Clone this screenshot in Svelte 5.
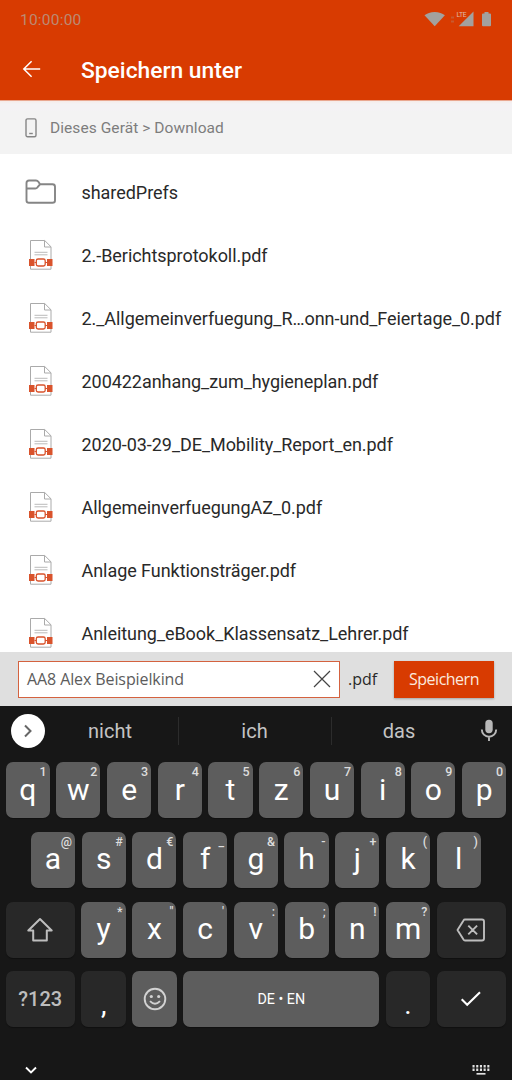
<script>
  const files = [
    '2.-Berichtsprotokoll.pdf',
    '2._Allgemeinverfuegung_R…onn-und_Feiertage_0.pdf',
    '200422anhang_zum_hygieneplan.pdf',
    '2020-03-29_DE_Mobility_Report_en.pdf',
    'AllgemeinverfuegungAZ_0.pdf',
    'Anlage Funktionsträger.pdf',
    'Anleitung_eBook_Klassensatz_Lehrer.pdf'
  ];
  const pair = (letters, hints) => [...letters].map((l, i) => ({ l, h: hints[i] }));
  const row1 = pair('qwertzuiop', '1234567890');
  const row2 = pair('asdfghjkl', '@#€_&-+()');
  const row3 = pair('yxcvbnm', '*"\':;!?');
</script>

{#snippet key(k)}
  <div class="key"><span class="letter">{k.l}</span><span class="hint">{k.h}</span></div>
{/snippet}

<div class="screen">
  <header>
    <div class="status">
      <span>10:00:00</span>
      <svg width="70" height="20" viewBox="0 0 70 20" fill="#a3a19e">
        <path d="M.5 6.200C3 4.300 6.500 3 10.700 3s7.700 1.300 10.200 3.200L10.700 17.300z" />
        <path d="M27 7.500h3v2h-3zM27 11.500h3v2h-3z" opacity=".3" />
        <path d="M49.500 2.500v14.800H34.700z" />
        <text x="32.500" y="7.600" font-size="6.800" textLength="10" fill="#e0bda9">LTE</text>
        <path d="M59 4.500h1.500V3h4v1.500H66q1 0 1 1v10.800q0 1-1 1h-7q-1 0-1-1V5.500q0-1 1-1z" />
      </svg>
    </div>
    <div class="title">
      <svg width="20" height="18" viewBox="0 0 20 18" fill="none" stroke="#fff" stroke-width="1.500"><path d="M18.200 9H1.800M9.600 1.200L1.800 9l7.800 7.800" /></svg>
      <h1>Speichern unter</h1>
    </div>
  </header>

  <nav>
    <svg width="12" height="20" viewBox="0 0 12 20" fill="none" stroke="#858585"><rect x="1" y=".9" width="10" height="17.800" rx="1.500" stroke-width="1.400" /><path d="M4.200 15.500h3.600" stroke-width="1.400" /></svg>
    <span>Dieses Gerät &gt; Download</span>
  </nav>

  <main>
    <div class="row">
      <div class="ico">
        <svg width="32" height="26" viewBox="0 0 32 26" fill="none" stroke="#858585" stroke-width="1.900" stroke-linejoin="round"><path d="M1.500 9.300V4q0-2.500 2.500-2.500h7q1.500 0 2.400 1.200L15 5.300h12.500q2.500 0 2.500 2.500v13.700q0 2.300-2.500 2.300H4q-2.500 0-2.500-2.300zM1.500 9.500h8.700q1.500 0 2.400-1.300L15 5.300" /></svg>
      </div>
      <span>sharedPrefs</span>
    </div>
    {#each files as f}
      <div class="row">
        <div class="ico">
          <svg width="26" height="32" viewBox="0 0 26 32" fill="none">
            <path d="M2.500 1.500h14.200l6.300 6.300v22.400H2.500z" fill="#fff" stroke="#aaa" stroke-width="1" />
            <path d="M16.500 1.500V8H23" stroke="#aaa" />
            <path d="M6.500 13.300h13M6.500 15.800h13" stroke="#bbb" stroke-width="1" />
            <path d="M1 20h5.500v7H1zM19 20h5.500v7H19z" fill="#d9532c" />
            <rect x="8.300" y="20" width="8.900" height="7" rx="1.800" fill="#fff" stroke="#d9532c" stroke-width="1.300" />
            <path d="M6.500 23.500h2M17 23.500h2" stroke="#d9532c" />
          </svg>
        </div>
        <span>{f}</span>
      </div>
    {/each}
  </main>

  <div class="save">
    <div class="field">
      <span>AA8 Alex Beispielkind</span>
      <svg width="18" height="18" viewBox="0 0 18 18" stroke="#444" stroke-width="1.200"><path d="M1 1l16 16M17 1L1 17" /></svg>
    </div>
    <span class="ext">.pdf</span>
    <div class="btn"><span>Speichern</span></div>
  </div>

  <div class="keyboard">
    <div class="suggest">
      <div class="more"><svg width="10" height="14" viewBox="0 0 10 14" fill="none" stroke="#666" stroke-width="2"><path d="M2 1.500L7.500 7 2 12.500" /></svg></div>
      <span class="w1">nicht</span><i></i><span class="w2">ich</span><i></i><span class="w3">das</span>
      <svg class="mic" width="18" height="24" viewBox="0 0 18 24"><rect x="5.300" y=".7" width="7.400" height="13.600" rx="3.700" fill="#b8b8b8" /><path d="M1.800 10.500a7.200 7.200 0 0 0 14.400 0M9 17.500V22" fill="none" stroke="#b8b8b8" stroke-width="1.900" /></svg>
    </div>
    <div class="keys">
      <div class="krow">{#each row1 as k}{@render key(k)}{/each}</div>
      <div class="krow mid">{#each row2 as k}{@render key(k)}{/each}</div>
      <div class="krow">
        <div class="key dark wide"><svg width="28" height="26" viewBox="0 0 28 26" fill="none" stroke="#bdbdbd" stroke-width="2" stroke-linejoin="round"><path d="M14 2L2.300 13.500h4.900v10h13.600v-10h4.900z" /></svg></div>
        {#each row3 as k}{@render key(k)}{/each}
        <div class="key dark wide"><svg width="30" height="24" viewBox="0 0 30 24" fill="none" stroke="#bdbdbd" stroke-width="1.900" stroke-linejoin="round"><path d="M9 1.500h17q2 0 2 2v17q0 2-2 2H9Q8 22.500 7.500 21.600L1.500 12l6-9.600Q8 1.500 9 1.500zM12.300 7.600l8.800 8.800M21.100 7.600l-8.800 8.800" /></svg></div>
      </div>
      <div class="krow">
        <div class="key dark wide sym">?123</div>
        <div class="key dark punct">,</div>
        <div class="key"><svg width="24" height="24" viewBox="0 0 24 24" fill="none" stroke="#d2d2d2" stroke-width="1.900"><circle cx="12" cy="12" r="10.300" /><path d="M7 14.200q5 5.200 10 0" /><circle cx="8.300" cy="9.500" r="1.600" fill="#d2d2d2" stroke="none" /><circle cx="15.700" cy="9.500" r="1.600" fill="#d2d2d2" stroke="none" /></svg></div>
        <div class="key space">DE • EN</div>
        <div class="key dark punct">.</div>
        <div class="key dark wide"><svg width="22" height="18" viewBox="0 0 22 18" fill="none" stroke="#fff" stroke-width="2.100"><path d="M1.700 9.200l5.500 5.500L20 2.200" /></svg></div>
      </div>
    </div>
    <div class="bottom">
      <svg width="14" height="9" viewBox="0 0 14 9" fill="none" stroke="#fff" stroke-width="1.900"><path d="M2 1.500l5 5 5-5" /></svg>
      <svg width="18" height="12" viewBox="0 0 18 12" stroke="#e2e2e2"><path d="M.5 2.200h17M.5 5.800h17" stroke-width="2.500" stroke-dasharray="2.100 1.600" /><path d="M4.500 9.800h9" stroke-width="1.700" /></svg>
    </div>
  </div>
</div>

<style>
  :global(body) { margin: 0; }
  .screen { width: 512px; height: 1080px; overflow: hidden; display: flex; flex-direction: column; background: #fff; font-family: Roboto, sans-serif; color: #292929; }
  .screen * { box-sizing: border-box; }
  svg { display: block; flex: none; }
  header { height: 100px; background: #d83b01; flex: none; }
  .status { height: 39px; padding: 1px 18px 0 20px; display: flex; align-items: center; justify-content: space-between; color: #bb8a73; font-size: 15.500px; letter-spacing: .22px; }
  .status svg { margin-top: -3px; letter-spacing: 0; }
  .title { height: 61px; display: flex; align-items: center; padding-left: 22px; gap: 39px; }
  .title svg { margin-top: -2px; }
  h1 { margin: 1px 0 0; color: #fff; font-size: 22.800px; font-weight: 500; }
  nav { height: 54px; flex: none; background: linear-gradient(#e9a791 0, #e9a791 1px, #f6ebe9 1px, #f4f2f5 4px, #f4f2f5 10px, #f3f3f3 11px); padding: 1px 0 0 25px; display: flex; align-items: center; gap: 13px; color: #7d7d7d; font-size: 15.500px; letter-spacing: .07px; }
  main { height: 498px; flex: none; padding-top: 6px; overflow: hidden; }
  .row { height: 63px; display: flex; align-items: center; font-size: 18px; white-space: nowrap; letter-spacing: -.05px; }
  .row span { padding: 1px 0 0 .5px; }
  .ico { width: 81px; display: flex; justify-content: center; }
  .save { height: 54px; flex: none; background: #dfdfdf; display: flex; align-items: center; padding-left: 18px; font-family: 'Open Sans', sans-serif; }
  .field { width: 322px; height: 37px; border: 1px solid #d4623f; background: #fff; display: flex; align-items: center; justify-content: space-between; padding: 0 8px; font-size: 16px; color: #5c5c5c; letter-spacing: -.1px; white-space: nowrap; }
  .ext { width: 54px; padding-left: 8px; font-size: 16px; }
  .btn { width: 100px; height: 37px; background: #d83b01; color: #fbe9df; display: flex; align-items: center; justify-content: center; font-size: 16px; letter-spacing: -.5px; box-shadow: 0 1px 2px #0004; }
  .keyboard { flex: 1; background: #171717; color: #fff; }
  .suggest { height: 56px; padding: 0 14px 6px 11px; display: flex; align-items: center; font-size: 20px; color: #c4c4c4; }
  .suggest span { text-align: center; }
  .suggest i { width: 1px; height: 28px; background: #2c2c2c; }
  .more { width: 34px; height: 34px; border-radius: 50%; background: #fff; display: flex; align-items: center; justify-content: center; }
  .w1 { width: 133px; padding-right: 3px; }
  .w2 { width: 152px; padding-right: 1px; }
  .w3 { width: 148px; padding-right: 14px; }
  .keys { display: flex; flex-direction: column; gap: 13.800px; padding: 0 5.900px 0 5.600px; }
  .krow { display: flex; gap: 6.600px; height: 56px; }
  .mid { padding: 0 25.300px; }
  .key { flex: 1 1 0; min-width: 0; border-radius: 7px; background: #5d5d5d; display: flex; align-items: center; justify-content: center; position: relative; box-shadow: 0 1px 1px #0005; }
  .letter { font-size: 30px; line-height: 36px; padding-bottom: 1px; }
  .hint { position: absolute; right: 3px; top: 2px; font-size: 12.500px; line-height: 15px; color: #ddd; font-weight: 500; }
  .dark { background: #282828; }
  .wide { flex: 0 0 69.300px; }
  .sym { font-size: 20px; font-weight: 500; color: #bdbdbd; }
  .space { flex: 0 0 196px; font-size: 14.300px; }
  .punct { font-size: 28px; align-items: flex-end; padding-bottom: 6px; line-height: 32px; }
  .bottom { display: flex; justify-content: space-between; align-items: center; padding: 37px 22px 0 24px; }
</style>
